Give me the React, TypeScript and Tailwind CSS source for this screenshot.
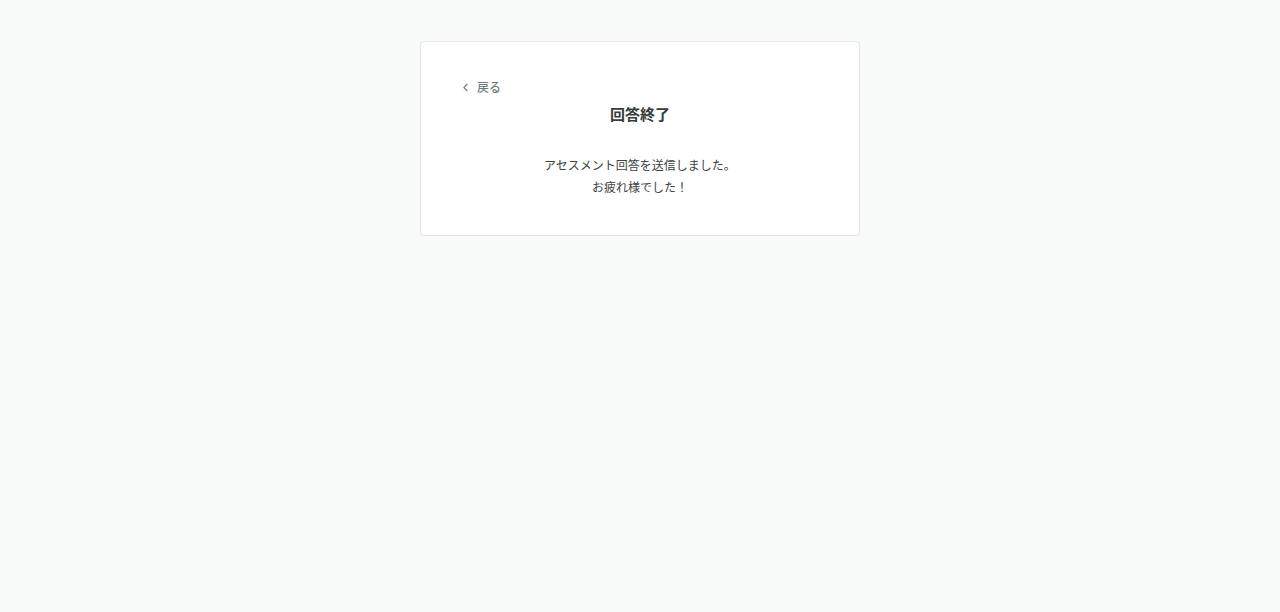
import { ChevronLeft } from "lucide-react";

export default function App() {
	return (
		<div className="min-h-[612px] w-full bg-[#f8f9f9] pt-[41px] font-['Noto_Sans_CJK_JP',sans-serif]">
			<div className="mx-auto w-[440px] rounded-[4px] border border-[#e4e7e7] bg-white px-10 pt-[35px] pb-[37px]">
				<button className="-ml-[2px] flex h-5 items-center gap-[5px] text-[12px] font-medium text-[#6f7f7f]">
					<ChevronLeft className="size-[13px]" strokeWidth={2} aria-hidden />
					<span>戻る</span>
				</button>
				<h1 className="mt-[5px] text-center text-[15px] leading-6 font-bold text-[#353c3c]">
					回答終了
				</h1>
				<div className="mt-[28px] text-center text-[12px] leading-[22px] text-[#3c4343]">
					<p>アセスメント回答を送信しました。</p>
					<p>お疲れ様でした！</p>
				</div>
			</div>
		</div>
	);
}
